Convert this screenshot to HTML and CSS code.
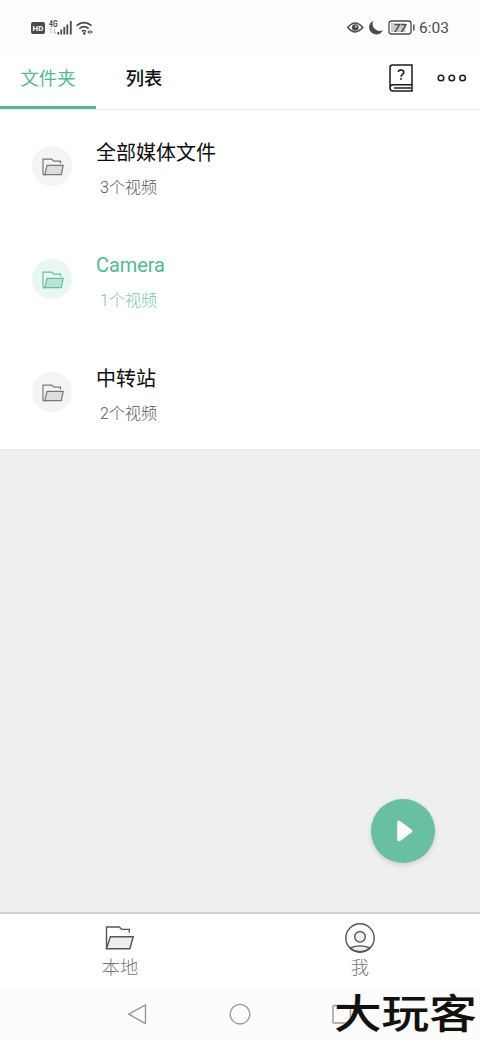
FILE: index.html
```html
<!DOCTYPE html>
<html lang="zh-CN">
<head>
<meta charset="utf-8">
<title>文件夹</title>
<link rel="stylesheet" href="styles.css">
</head>
<body>
<svg class="defs" width="0" height="0">
  <symbol id="folder" viewBox="0 0 30 26">
    <path d="M1.5 24V2H14L16.8 4.4H24.3V7.6" fill="none" stroke="currentColor"/>
    <path d="M5.3 11.8H28.2L24.8 23.8H1.5Z" class="flap" stroke="currentColor"/>
  </symbol>
  <symbol id="folder-small" viewBox="0 0 22 18">
    <path d="M1 16.8V1.2H9.6L12 3.2H18.5V5.6" fill="none" stroke="currentColor"/>
    <path d="M5 7.3H21.2L19.3 16.7H2.8Z" class="flap" stroke="currentColor"/>
    <path d="M1 16.7H4" stroke="currentColor"/>
  </symbol>
</svg>
<div class="screen">
  <header class="status">
    <svg class="status-left" width="64" height="18" viewBox="0 0 64 18">
      <rect x="0" y="3" width="14" height="12" rx="2" fill="#4b4b4b"/>
      <text x="7" y="12.1" class="hd">HD</text>
      <text x="18" y="7.8" class="gen" textLength="8.5" lengthAdjust="spacingAndGlyphs">4G</text>
      <path d="M20 10v4.5M18.6 11.4l1.4-1.5M23.5 10v4.5M25 13l-1.5 1.5" stroke="#aaa" stroke-width=".8" fill="none"/>
      <path d="M27.3 13v2.5M30.3 10.5v5M33.3 8v7.5M36.3 5.5v10M39.8 2v13.5" stroke="#4b4b4b" stroke-width="1.8"/>
      <path d="M45.5 6.7Q53 .5 60.5 6.7M48.3 9.6Q53 5.8 57.7 9.6M50.8 12.3Q53 10.7 55 12.3" stroke="#4b4b4b" stroke-width="1.7" fill="none"/>
      <circle cx="53.3" cy="14.4" r="1.3" fill="#4b4b4b"/>
      <path d="M58.5 11l-2.3 2 2.3 2M59.5 11l2.3 2-2.3 2" fill="#4b4b4b"/>
    </svg>
    <div class="status-right">
      <svg width="68" height="18" viewBox="0 0 68 18">
        <path d="M.8 8.5Q8-.3 15.7 8.5 8 17.3.8 8.5Z" fill="none" stroke="#4b4b4b" stroke-width="1.5"/>
        <circle cx="8.3" cy="8.5" r="3.3" fill="#4b4b4b"/>
        <circle cx="9" cy="7.5" r="1" fill="#ddd"/>
        <path d="M26.3 1.7A7.2 7.2 0 1 0 35.8 11.3 7.2 7.2 0 0 1 26.3 1.7Z" fill="#4b4b4b"/>
        <rect x="42" y="2" width="22" height="13" rx="2.5" fill="#fff" stroke="#4b4b4b" stroke-width="1.3"/>
        <rect x="44" y="4" width="14.5" height="9" fill="#ccc"/>
        <path d="M66.8 5.5v6" stroke="#4b4b4b" stroke-width="1.4"/>
        <text x="53" y="12.7" class="charge">77</text>
      </svg>
      <span class="clock">6:03</span>
    </div>
  </header>

  <nav class="tabs">
    <a class="tab tab-active">文件夹</a>
    <a class="tab tab-list">列表</a>
    <div class="actions">
      <svg width="24" height="28" viewBox="0 0 24 28">
        <path d="M23 20.8V1H3.5Q1 1 1 3.5V23.7Q1 27 4 27H23V20.8H4.5Q1 20.8 1 24" fill="none" stroke="#1c1c1c" stroke-width="1.5"/>
        <path d="M5 24H22" stroke="#1c1c1c" stroke-width="1.5"/>
        <path d="M9.4 8C9.4 5.2 14.8 5.2 14.8 8.2 14.8 10.4 12 10.4 12 12.8M12 14V15.7" fill="none" stroke="#1c1c1c" stroke-width="1.6"/>
      </svg>
      <svg width="30" height="8" viewBox="0 0 30 8" fill="none" stroke="#1c1c1c" stroke-width="1.5">
        <circle cx="4" cy="4" r="2.8"/><circle cx="14.8" cy="4" r="2.8"/><circle cx="25.6" cy="4" r="2.8"/>
      </svg>
    </div>
  </nav>

  <main class="folders">
    <div class="row">
      <div class="disc"><svg width="22" height="18"><use href="#folder-small"/></svg></div>
      <div class="info"><div class="name">全部媒体文件</div><div class="count">3个视频</div></div>
    </div>
    <div class="row row-active">
      <div class="disc"><svg width="22" height="18"><use href="#folder-small"/></svg></div>
      <div class="info"><div class="name latin">Camera</div><div class="count">1个视频</div></div>
    </div>
    <div class="row">
      <div class="disc"><svg width="22" height="18"><use href="#folder-small"/></svg></div>
      <div class="info"><div class="name">中转站</div><div class="count">2个视频</div></div>
    </div>
  </main>

  <div class="blank">
    <div class="play">
      <svg width="18" height="24" viewBox="0 0 18 24"><path d="M3 3.5V20.5L14.5 12Z" fill="#fff" stroke="#fff" stroke-width="3.6" stroke-linejoin="round"/></svg>
    </div>
  </div>

  <footer class="bottom">
    <div class="item">
      <svg class="local" width="30" height="26"><use href="#folder"/></svg>
      <span>本地</span>
    </div>
    <div class="item">
      <svg class="me" width="30" height="30" viewBox="0 0 30 30" fill="none" stroke="#555" stroke-width="1.4">
        <circle cx="15" cy="15" r="14.2"/><circle cx="15" cy="13.8" r="5.3" fill="#eee"/>
        <path d="M5 25Q15 20.8 25 25Q15 32.5 5 25Z" fill="#eee"/>
      </svg>
      <span>我</span>
    </div>
  </footer>

  <div class="system">
    <svg width="480" height="51" viewBox="0 0 480 51" fill="none" stroke="#999" stroke-width="1.4" stroke-linejoin="round">
      <path d="M128.8 25.2L145.5 15.8V34.6Z"/><circle cx="240" cy="25.2" r="9.8"/><rect x="333" y="16.5" width="17.5" height="17.5" rx="1"/>
    </svg>
    <div class="mark">大玩客</div>
  </div>
</div>
</body>
</html>
```
FILE: styles.css
```css
body {
  margin: 0;
  background: #fff;
  font-family: Roboto, "Noto Sans CJK SC", sans-serif;
}
.defs { position: absolute; }
svg { display: block; flex: none; }
.screen {
  width: 480px;
  height: 1040px;
  display: flex;
  flex-direction: column;
}
.status {
  height: 54px;
  box-sizing: border-box;
  padding: 1px 31px 0 31px;
  display: flex;
  justify-content: space-between;
  align-items: center;
  background: #fdfdfd;
}
.status-right { display: flex; align-items: center; gap: 4px; }
.clock { font-size: 15.5px; line-height: 18px; color: #4b4b4b; }
.hd { font: 700 8px Roboto, sans-serif; fill: #fff; text-anchor: middle; }
.gen { font: 700 8.5px Roboto, sans-serif; fill: #4b4b4b; }
.charge { font: italic 700 11.5px Roboto, sans-serif; fill: #4b4b4b; text-anchor: middle; }
.tabs {
  height: 57px;
  box-sizing: border-box;
  border-bottom: 2px solid #efefef;
  display: flex;
}
.tab {
  box-sizing: border-box;
  width: 96px;
  height: 55px;
  text-align: center;
  font-size: 18.3px;
  line-height: 50px;
  color: #111;
}
.tab-active { color: #55b795; border-bottom: 3px solid #55b795; }
.tab-list { font-weight: 500; }
.actions {
  flex: 1;
  display: flex;
  align-items: center;
  justify-content: flex-end;
  gap: 24px;
  height: 47px;
  padding-right: 13px;
}
.folders { background: #fff; margin-top: -1px; }
.row {
  height: 113px;
  display: flex;
  align-items: center;
  padding-left: 32px;
  gap: 24px;
  color: #777;
}
.disc {
  width: 40px;
  height: 40px;
  margin-bottom: 1px;
  border-radius: 50%;
  background: #f4f4f4;
  display: flex;
  align-items: center;
  justify-content: center;
  --flap: #ddd;
}
.flap { fill: var(--flap); }
.disc svg { stroke-width: 1.2; margin: 2px 0 0 1px; }
.info { padding-top: 5px; }
.name { font-size: 20px; line-height: 30px; color: #0c0c0c; }
.latin { letter-spacing: -.1px; margin-top: -1px; padding-bottom: 1px; }
.count { font-size: 16px; line-height: 24px; padding: 8px 0 0 4px; color: #555; font-weight: 300; }
.row-active { color: #67bfa2; }
.row-active .disc { background: #e9f7f3; --flap: #b9e2d5; }
.row-active .name { color: #55b795; }
.row-active .count { color: #78c6ac; }
.blank {
  flex: 1;
  background: #efefef;
  border-top: 1px solid #e5e5e5;
  display: flex;
  justify-content: flex-end;
  align-items: flex-end;
  padding: 0 45px 49px 0;
}
.play {
  width: 64px;
  height: 64px;
  border-radius: 50%;
  background: #68bfa2;
  box-shadow: 0 2px 5px rgba(0, 0, 0, .14);
  display: flex;
  align-items: center;
  justify-content: center;
}
.play svg { margin-left: 4px; }
.bottom {
  height: 77px;
  box-sizing: border-box;
  border-top: 2px solid #d2d2d2;
  background: #fff;
  display: flex;
}
.item {
  flex: 1;
  display: flex;
  flex-direction: column;
  align-items: center;
  padding-top: 9px;
  color: #555;
}
.item svg { margin-bottom: 2px; }
.item span { font-size: 18.3px; line-height: 26px; color: #777; font-weight: 300; }
.local { --flap: #eee; stroke-width: 1.4; padding: 2px 0; }
.system { height: 51px; background: #fcfcfc; position: relative; }
.mark {
  position: absolute;
  left: 334px;
  top: -1px;
  font: 500 47.6px/46px "Noto Sans CJK SC", sans-serif;
  color: #111;
  white-space: nowrap;
  transform: scaleY(.84);
  text-shadow: 0 0 1px #d8d0a0;
}
```
